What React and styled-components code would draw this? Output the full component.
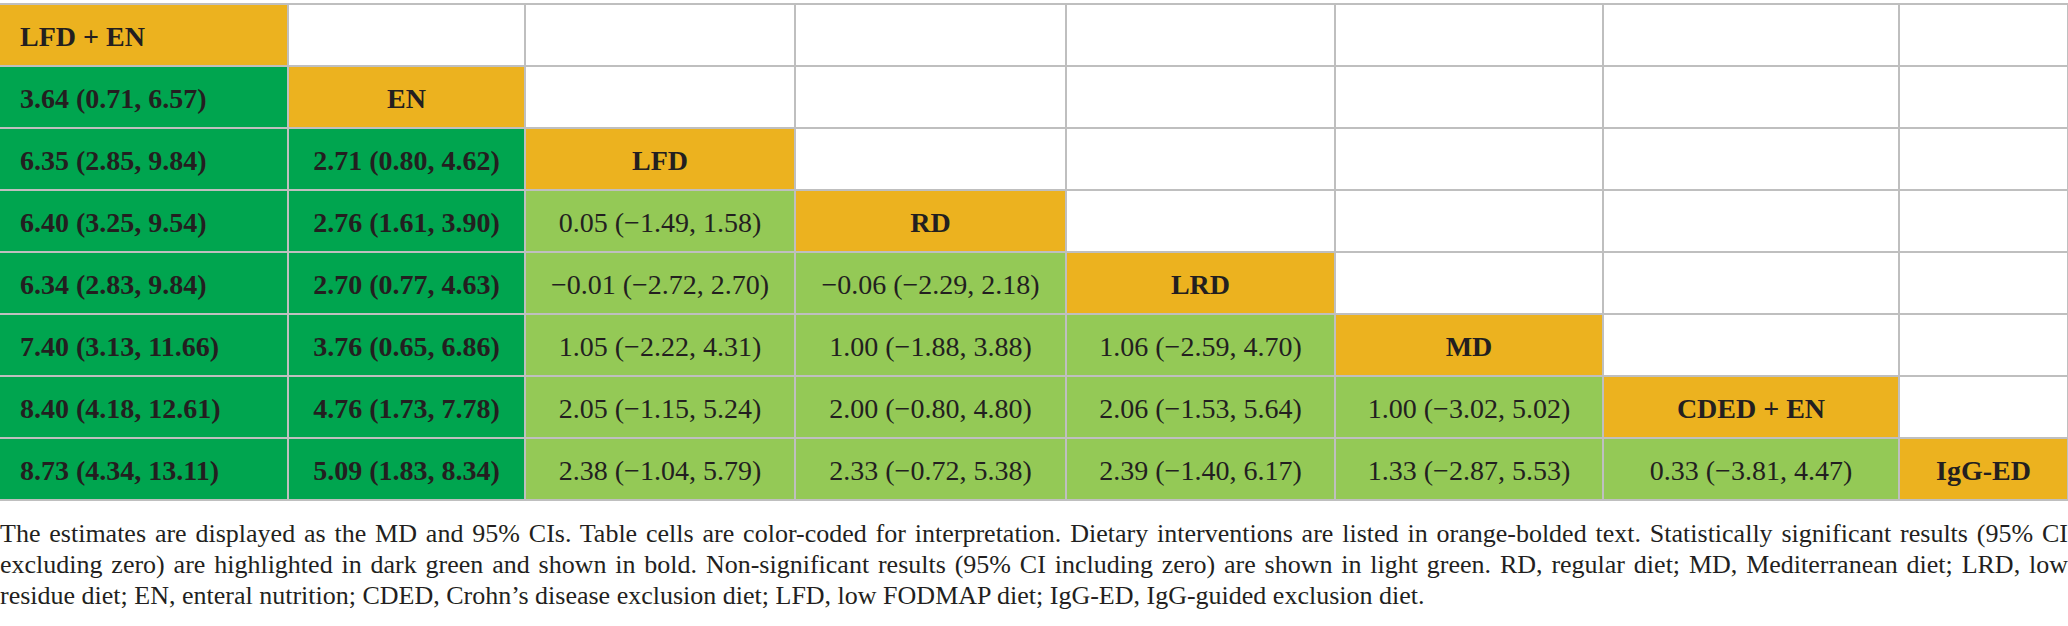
import React from "react";
import styled, { createGlobalStyle } from "styled-components";

const GlobalStyle = createGlobalStyle`
  html, body {
    margin: 0;
    padding: 0;
    background: #ffffff;
  }
  body {
    font-family: "Liberation Serif", "Times New Roman", serif;
    color: #231f20;
  }
`;

const COLORS = {
  diet: "#ecb21f",
  sig: "#00a54f",
  ns: "#94c956",
  empty: "#ffffff",
};

const Wrapper = styled.div`
  width: 2068px;
  padding-top: 3px;
`;

const Table = styled.table`
  width: 2068px;
  border-collapse: collapse;
  table-layout: fixed;
`;

const Row = styled.tr`
  height: 62px;
`;

const Cell = styled.td`
  background: ${(p) => COLORS[p.$kind]};
  border: 2px solid #bfbfbf;
  font-family: "Liberation Serif", "Times New Roman", serif;
  font-size: 28px;
  color: #231f20;
  font-weight: ${(p) => (p.$kind === "diet" || p.$kind === "sig" ? 700 : 400)};
  text-align: ${(p) => (p.$first ? "left" : "center")};
  padding: 3px 0 0 ${(p) => (p.$first ? "20px" : "0")};
  vertical-align: middle;
  white-space: nowrap;

  &:first-child {
    border-left: none;
  }
`;

const Caption = styled.div`
  margin-top: 17px;
  font-size: 26px;
  line-height: 31px;
`;

const Line = styled.span`
  display: block;
  white-space: nowrap;
  text-align: justify;
  text-align-last: ${(p) => (p.$full ? "justify" : "left")};
`;

const widths = [288, 237, 270, 271, 269, 268, 296, 169];

const diets = ["LFD + EN", "EN", "LFD", "RD", "LRD", "MD", "CDED + EN", "IgG-ED"];

// lower triangle: row i holds i comparisons, then the diet name
const values = [
  [],
  ["3.64 (0.71, 6.57)"],
  ["6.35 (2.85, 9.84)", "2.71 (0.80, 4.62)"],
  ["6.40 (3.25, 9.54)", "2.76 (1.61, 3.90)", "0.05 (−1.49, 1.58)"],
  ["6.34 (2.83, 9.84)", "2.70 (0.77, 4.63)", "−0.01 (−2.72, 2.70)", "−0.06 (−2.29, 2.18)"],
  ["7.40 (3.13, 11.66)", "3.76 (0.65, 6.86)", "1.05 (−2.22, 4.31)", "1.00 (−1.88, 3.88)", "1.06 (−2.59, 4.70)"],
  ["8.40 (4.18, 12.61)", "4.76 (1.73, 7.78)", "2.05 (−1.15, 5.24)", "2.00 (−0.80, 4.80)", "2.06 (−1.53, 5.64)", "1.00 (−3.02, 5.02)"],
  ["8.73 (4.34, 13.11)", "5.09 (1.83, 8.34)", "2.38 (−1.04, 5.79)", "2.33 (−0.72, 5.38)", "2.39 (−1.40, 6.17)", "1.33 (−2.87, 5.53)", "0.33 (−3.81, 4.47)"],
];

const captionLines = [
  "The estimates are displayed as the MD and 95% CIs. Table cells are color-coded for interpretation. Dietary interventions are listed in orange-bolded text. Statistically significant results (95% CI",
  "excluding zero) are highlighted in dark green and shown in bold. Non-significant results (95% CI including zero) are shown in light green. RD, regular diet; MD, Mediterranean diet; LRD, low",
  "residue diet; EN, enteral nutrition; CDED, Crohn’s disease exclusion diet; LFD, low FODMAP diet; IgG-ED, IgG-guided exclusion diet.",
];

function cellKind(row, col) {
  if (col === row) return "diet";
  if (col > row) return "empty";
  return col < 2 ? "sig" : "ns";
}

export default function App() {
  return (
    <Wrapper>
      <GlobalStyle />
      <Table>
        <colgroup>
          {widths.map((w, i) => (
            <col key={i} style={{ width: w }} />
          ))}
        </colgroup>
        <tbody>
          {diets.map((diet, r) => (
            <Row key={diet}>
              {widths.map((_, c) => {
                const kind = cellKind(r, c);
                let text = "";
                if (kind === "diet") text = diet;
                else if (kind !== "empty") text = values[r][c];
                return (
                  <Cell key={c} $kind={kind} $first={c === 0}>
                    {text}
                  </Cell>
                );
              })}
            </Row>
          ))}
        </tbody>
      </Table>
      <Caption>
        {captionLines.map((line, i) => (
          <Line key={i} $full={i < captionLines.length - 1}>
            {line}
          </Line>
        ))}
      </Caption>
    </Wrapper>
  );
}
